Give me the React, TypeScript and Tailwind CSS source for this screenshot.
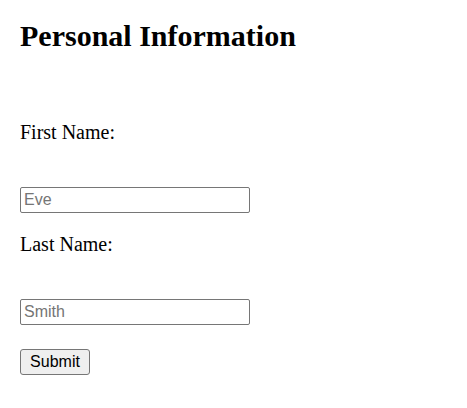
export default function App() {
  return (
    <div className="p-5 font-['Liberation_Serif',serif] text-black bg-white min-h-[408px]">
      <h1 className="text-[30px] font-bold leading-8 m-0">Personal Information</h1>
      <form className="mt-[68px] flex flex-col items-start" onSubmit={(e) => e.preventDefault()}>
        <label htmlFor="first" className="text-[20px] leading-6 block">First Name:</label>
        <input
          id="first"
          type="text"
          placeholder="Eve"
          className="mt-[43px] w-[230px] h-[26px] border border-[#767676] rounded-[2px] px-[3px] font-['Liberation_Sans',sans-serif] text-[16px] placeholder:text-[#757575]"
        />
        <label htmlFor="last" className="mt-[19px] text-[20px] leading-6 block">Last Name:</label>
        <input
          id="last"
          type="text"
          placeholder="Smith"
          className="mt-[43px] w-[230px] h-[26px] border border-[#767676] rounded-[2px] px-[3px] font-['Liberation_Sans',sans-serif] text-[16px] placeholder:text-[#757575]"
        />
        <button
          type="submit"
          className="mt-[24px] h-[26px] w-[70px] border border-[#767676] rounded-[3px] bg-[#efefef] font-['Liberation_Sans',sans-serif] text-[16px] leading-none"
        >
          Submit
        </button>
      </form>
    </div>
  );
}
